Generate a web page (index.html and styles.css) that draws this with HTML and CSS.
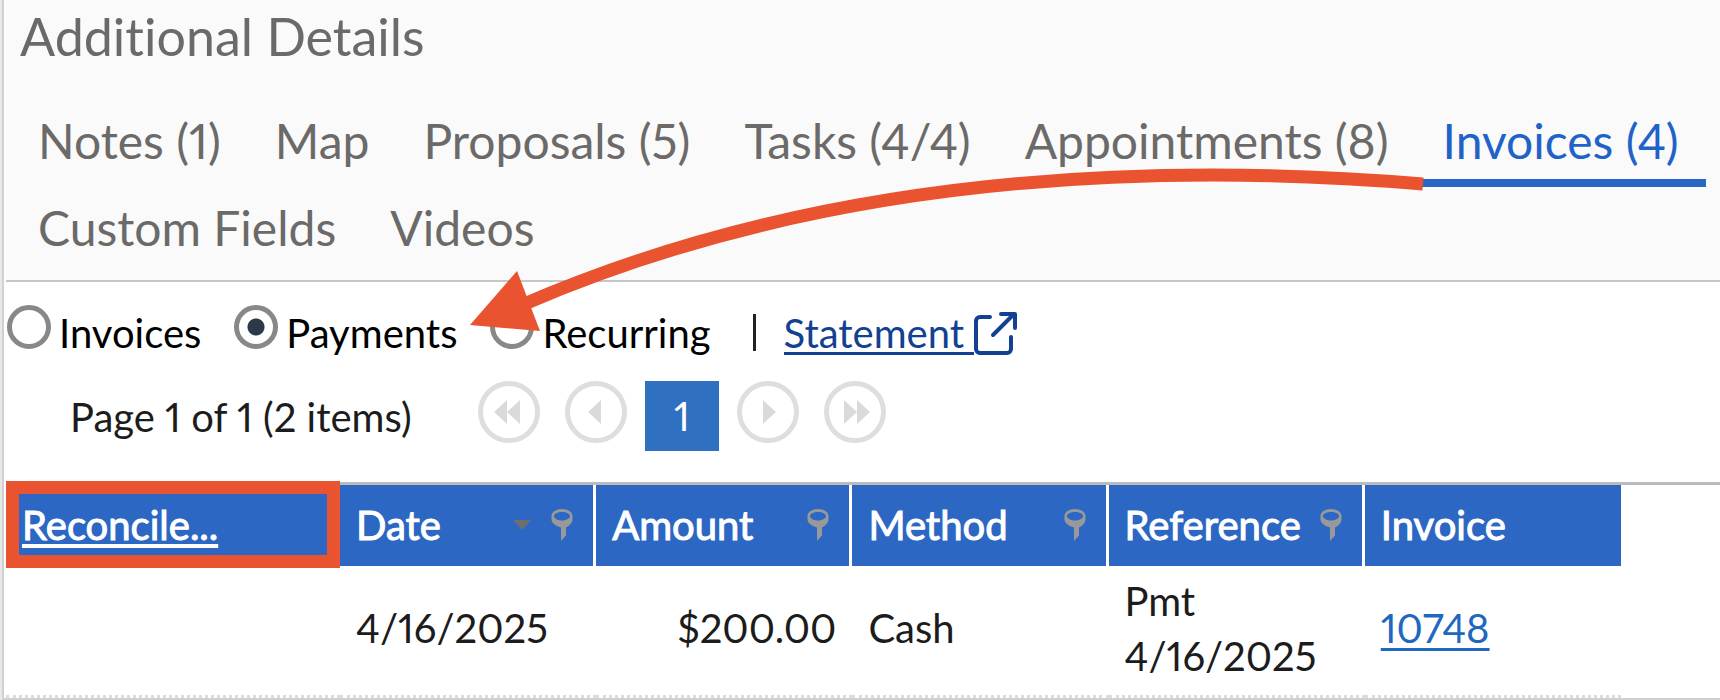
FILE: index.html
```
<!DOCTYPE html>
<html lang="en">
<head>
  <meta charset="UTF-8">
  <title>Additional Details</title>
  <link rel="stylesheet" href="styles.css">
</head>
<body>

  <svg class="symbols" width="0" height="0" aria-hidden="true">
    <symbol id="filter" viewBox="0 0 22 32">
      <path fill="#999" fill-rule="evenodd" d="M11 0C17 0 21.500 3 21.500 7v3c0 4-3 6.500-6.500 8.500v8L10 32V18.500C4 16.500 .5 14 .5 10V7C.5 3 5 0 11 0zm0 3C6.500 3 3 4.800 3 7s3.500 4.500 8 4.500S19 9.200 19 7s-3.500-4-8-4z"/>
    </symbol>
  </svg>

  <main class="panel">
    <header class="panel-head">
      <h1>Additional Details</h1>
      <nav class="tabs">
        <a href="#notes">Notes (1)</a>
        <a href="#map">Map</a>
        <a href="#proposals">Proposals (5)</a>
        <a href="#tasks">Tasks (4/4)</a>
        <a href="#appointments">Appointments (8)</a>
        <a href="#invoices" class="active">Invoices (4)</a>
        <a href="#custom">Custom Fields</a>
        <a href="#videos">Videos</a>
      </nav>
    </header>

    <form class="views">
      <label><input type="radio" name="view">Invoices</label>
      <label><input type="radio" name="view" checked>Payments</label>
      <label><input type="radio" name="view">Recurring</label>
      <span class="divider"></span>
      <a href="#statement" class="statement"><span>Statement&nbsp;</span><svg width="44" height="44" viewBox="0 0 44 44" fill="none" stroke="#134191" stroke-width="4" stroke-linecap="round" stroke-linejoin="round"><path d="M16 6H6a4 4 0 0 0-4 4v28a4 4 0 0 0 4 4h27a4 4 0 0 0 4-4V26M19 24L39 4M27 3h14v14"/></svg></a>
    </form>

    <div class="pager">
      <span class="summary">Page 1 of 1 (2 items)</span>
      <button type="button" class="round" aria-label="First page" disabled><svg viewBox="0 0 62 62"><path d="M29 19v24L16 31zM42 19v24L29 31z"/></svg></button>
      <button type="button" class="round" aria-label="Previous page" disabled><svg viewBox="0 0 62 62"><path d="M36 19v24L23 31z"/></svg></button>
      <button type="button" class="current">1</button>
      <button type="button" class="round" aria-label="Next page" disabled><svg viewBox="0 0 62 62"><path d="M26 19v24l13-12z"/></svg></button>
      <button type="button" class="round" aria-label="Last page" disabled><svg viewBox="0 0 62 62"><path d="M20 19v24l13-12zM33 19v24l13-12z"/></svg></button>
    </div>

    <div class="grid">
      <table>
        <thead>
          <tr>
            <th class="reconcile"><a href="#reconcile">Reconcile...</a></th>
            <th><div class="col">Date<svg class="sort" width="18" height="10" viewBox="0 0 18 10"><path fill="#6e6e6e" d="M0 0h18L9 10z"/></svg><svg class="filter"><use href="#filter"/></svg></div></th>
            <th><div class="col">Amount<svg class="filter"><use href="#filter"/></svg></div></th>
            <th><div class="col">Method<svg class="filter"><use href="#filter"/></svg></div></th>
            <th><div class="col">Reference<svg class="filter"><use href="#filter"/></svg></div></th>
            <th><div class="col">Invoice</div></th>
          </tr>
        </thead>
        <tbody>
          <tr>
            <td></td>
            <td>4/16/2025</td>
            <td class="money">$200.00</td>
            <td>Cash</td>
            <td>Pmt 4/16/2025</td>
            <td><a href="#10748">10748</a></td>
          </tr>
        </tbody>
      </table>
    </div>

    <!-- callout arrow from the Invoices tab to Payments -->
    <svg class="arrow" width="960" height="170" viewBox="0 0 960 170">
      <path d="M956 21Q433-22 55 142" fill="none" stroke="#e9532f" stroke-width="13"/>
      <path d="M3 162L50 108L73 168z" fill="#e9532f"/>
    </svg>
  </main>

</body>
</html>
```
FILE: styles.css
```
* {
  box-sizing: border-box;
}

body {
  margin: 0;
  background-color: #e8e8e6;
  font-family: Lato, "Liberation Sans", sans-serif;
  font-size: 40px;
  font-variant-ligatures: none;
  font-variant-numeric: proportional-nums;
  color: #1c1c1c;
}

.symbols {
  position: absolute;
}

.panel {
  position: relative;
  margin-left: 2px;
  padding-left: 2px;
  background-color: #fff;
  border-left: 2px solid #d0d0ce;
  border-bottom: 2px solid #d0d0d0;
}

.panel-head {
  background-color: #fafafa;
  border-bottom: 2px solid #c6c6c6;
}

h1 {
  margin: 0;
  padding: 4px 14px 0;
  font-size: 52px;
  font-weight: normal;
  line-height: 64px;
  color: #6b6a69;
}

.tabs {
  display: flex;
  flex-wrap: wrap;
  padding: 32px 0 6px 5px;
}

.tabs a {
  height: 87px;
  padding: 11px 27px 0;
  border-bottom: 8px solid transparent;
  font-size: 48px;
  line-height: 60px;
  color: #6b6a69;
  text-decoration: none;
}

.tabs a.active {
  color: #1f63c8;
  border-bottom-color: #2a66c4;
}

.views {
  display: flex;
  align-items: flex-start;
  padding: 23px 0 0 1px;
  line-height: 56px;
  color: #000;
}

.views label {
  display: flex;
  margin-right: 33px;
}

.views input {
  appearance: none;
  width: 44px;
  height: 44px;
  margin: 0 8px 0 0;
  border: 5px solid #888;
  border-radius: 50%;
  background-color: #fff;
}

.views input:checked {
  background-image: radial-gradient(circle, #2b3a4b 8px, transparent 9px);
}

.divider {
  width: 3px;
  height: 37px;
  margin: 9px 28px 0 9px;
  background-color: #222;
}

.statement {
  display: flex;
  color: #134191;
  text-decoration: none;
}

.statement span {
  height: 50px;
  border-bottom: 3px solid #134191;
}

.statement svg {
  margin-top: 6px;
}

.pager {
  display: flex;
  align-items: flex-start;
  height: 121px;
  padding: 20px 0 0 64px;
}

.summary {
  width: 382px;
  padding-top: 4px;
  line-height: 64px;
}

.summary + .round {
  margin-left: 26px;
}

.pager button {
  padding: 0;
  border: none;
  font: inherit;
}

.pager .round {
  width: 62px;
  height: 62px;
  margin-right: 25px;
  border: 5px solid #dedede;
  border-radius: 50%;
  background-color: #fff;
}

.round svg {
  display: block;
  margin: -5px;
  fill: #dadada;
}

.pager .current {
  width: 74px;
  height: 70px;
  margin: 0 18px 0 -7px;
  background-color: #2f70c1;
  color: #fff;
}

.grid {
  border-top: 3px solid #bbb;
}

table {
  width: 1615px;
  border-collapse: separate;
  border-spacing: 0;
  table-layout: fixed;
}

th {
  height: 81px;
  padding: 0 20px 2px 16px;
  border-right: 3px solid #fff;
  background-color: #2c67c3;
  color: #fff;
  font-weight: normal;
  text-align: left;
  -webkit-text-stroke: 1px #fff;
}

th:last-child {
  border-right: none;
}

.reconcile {
  position: relative;
  width: 334px;
  border-right: none;
}

.reconcile a {
  color: #fff;
  text-decoration-thickness: 4px;
  text-underline-offset: 4px;
}

/* red highlight box round the Reconcile header */
.reconcile::after {
  content: "";
  position: absolute;
  inset: -4px 0 -2px;
  border: 13px solid #e9532f;
}

.col {
  display: flex;
  align-items: center;
}

.filter {
  width: 22px;
  height: 32px;
  margin-left: auto;
}

.sort {
  margin-left: auto;
}

.sort + .filter {
  margin-left: 20px;
}

td {
  height: 132px;
  padding: 0 16px 4px;
  border-bottom: 3px dotted #dcdcdc;
  line-height: 55px;
}

.money {
  text-align: right;
}

td a {
  color: #1f68c0;
  text-decoration-thickness: 3px;
  text-underline-offset: 5px;
}

.arrow {
  position: absolute;
  left: 463px;
  top: 163px;
  pointer-events: none;
}
```
